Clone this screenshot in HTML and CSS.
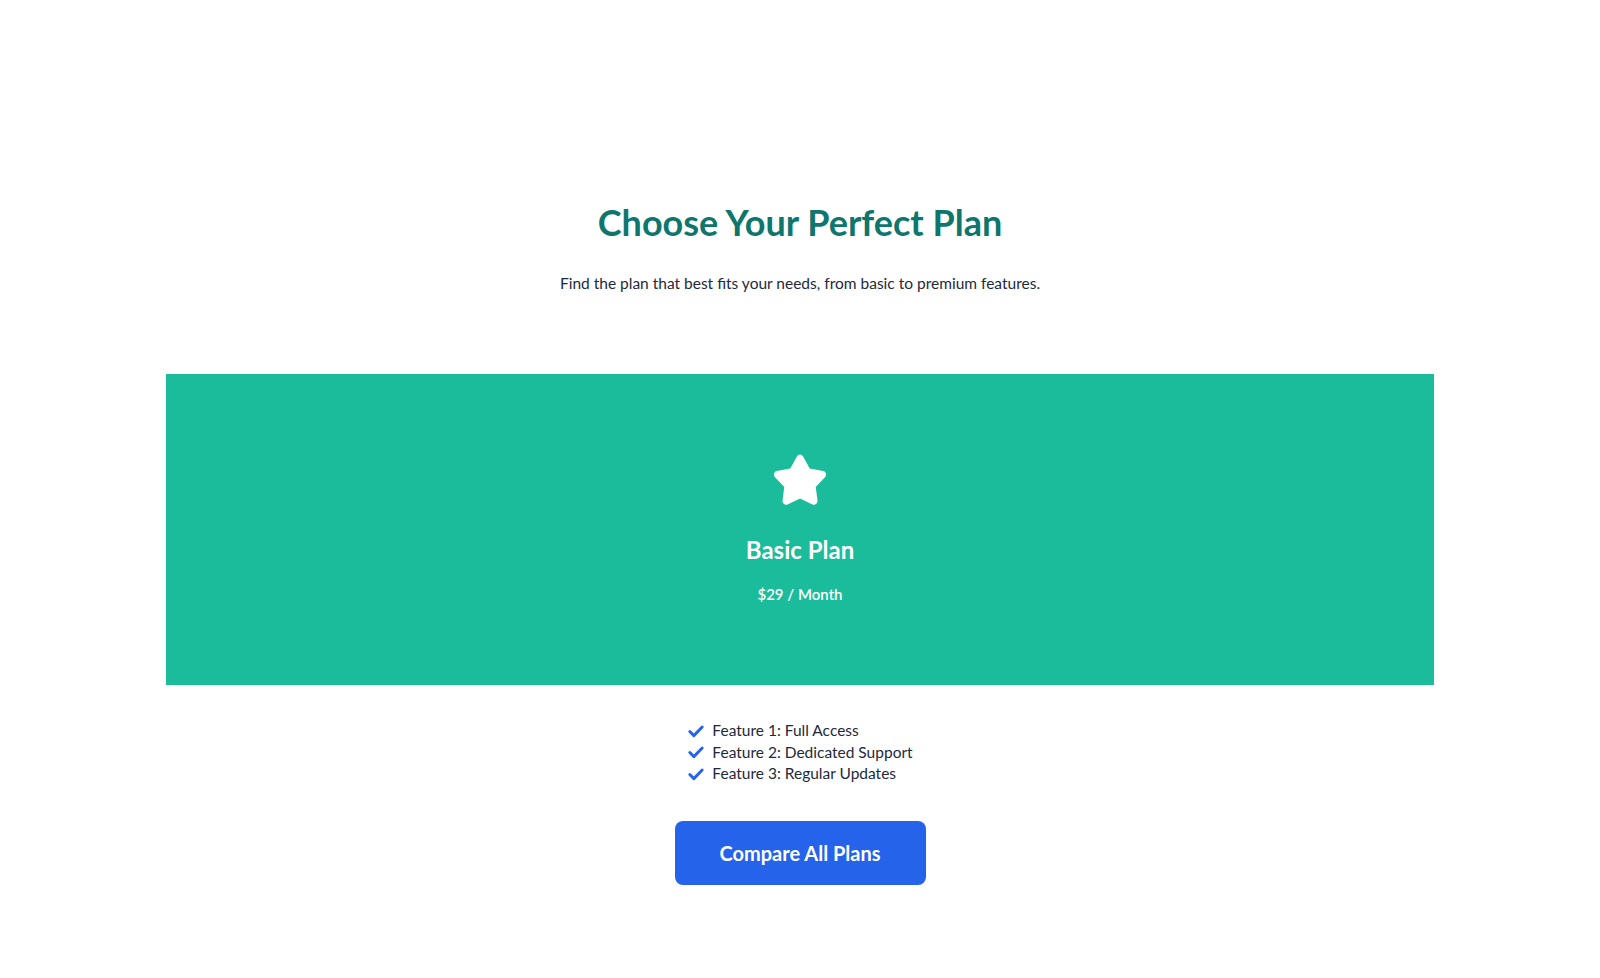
FILE: index.html
```html
<!DOCTYPE html>
<html>
<head>
    <title>Choose Your Perfect Plan</title>
    <link rel="stylesheet" href="styles.css">
</head>
<body>
    <section class="pricing">
        <h1>Choose Your Perfect Plan</h1>
        <p class="intro">Find the plan that best fits your needs, from basic to premium features.</p>

        <div class="plan">
            <svg class="plan-icon" viewBox="0 0 24 24" width="62" height="62">
                <path fill="#fff" d="M10.79 2.87a1.4 1.4 0 0 1 2.42 0l2.55 4.68 5.25.98a1.4 1.4 0 0 1 .75 2.3l-3.67 3.88.69 5.3a1.4 1.4 0 0 1-1.96 1.43L12 19.16l-4.82 2.28a1.4 1.4 0 0 1-1.96-1.43l.69-5.3-3.67-3.88a1.4 1.4 0 0 1 .75-2.3l5.25-.98z"/>
            </svg>
            <h2>Basic Plan</h2>
            <p class="price">$29 / Month</p>
        </div>

        <ul class="features">
            <li><svg class="check" viewBox="0 0 16 16" width="18" height="18"><path d="M2.5 8.5l3.6 3.6L13.5 4.5" fill="none" stroke="#2563eb" stroke-width="2.6" stroke-linecap="round" stroke-linejoin="round"/></svg>Feature 1: Full Access</li>
            <li><svg class="check" viewBox="0 0 16 16" width="18" height="18"><path d="M2.5 8.5l3.6 3.6L13.5 4.5" fill="none" stroke="#2563eb" stroke-width="2.6" stroke-linecap="round" stroke-linejoin="round"/></svg>Feature 2: Dedicated Support</li>
            <li><svg class="check" viewBox="0 0 16 16" width="18" height="18"><path d="M2.5 8.5l3.6 3.6L13.5 4.5" fill="none" stroke="#2563eb" stroke-width="2.6" stroke-linecap="round" stroke-linejoin="round"/></svg>Feature 3: Regular Updates</li>
        </ul>

        <button class="compare">Compare All Plans</button>
    </section>
</body>
</html>
```

FILE: styles.css
```css
body {
    margin: 0;
    font-family: "Lato", "Open Sans", sans-serif;
    color: #1e293b;
    background: #fff;
}

.pricing {
    display: flex;
    flex-direction: column;
    align-items: center;
    padding: 202px 166px 80px;
    text-align: center;
}

h1 {
    margin: 0;
    font-size: 36px;
    line-height: 40px;
    font-weight: 700;
    color: #0f766e;
}

.intro {
    margin: 29px 0 0;
    font-size: 15.5px;
    line-height: 24px;
}

.plan {
    align-self: stretch;
    margin-top: 79px;
    padding: 75px 0 79px;
    background: #1abc9c;
    color: #fff;
    display: flex;
    flex-direction: column;
    align-items: center;
}

.plan-icon {
    display: block;
}

.plan h2 {
    margin: 23px 0 0;
    font-size: 24px;
    line-height: 32px;
    font-weight: 700;
}

.price {
    margin: 16px 0 0;
    font-size: 15px;
    line-height: 24px;
    font-weight: 600;
}

.features {
    list-style: none;
    margin: 35px 0 0;
    padding: 0;
    text-align: left;
    font-size: 15.5px;
    line-height: 21.5px;
}

.features li {
    display: flex;
    align-items: center;
    gap: 7px;
}

.compare {
    margin-top: 36px;
    width: 251px;
    height: 64px;
    font-family: inherit;
    font-size: 20px;
    font-weight: 700;
    color: #fff;
    background: #2563eb;
    border: none;
    border-radius: 8px;
    cursor: pointer;
}
```
